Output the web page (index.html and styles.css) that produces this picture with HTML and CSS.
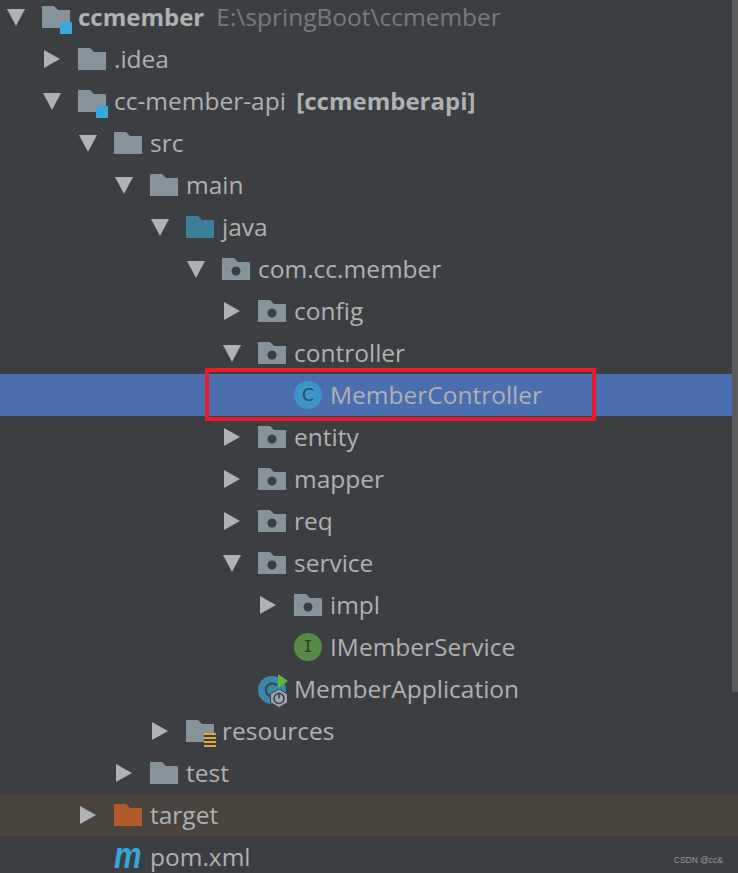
FILE: index.html
```html
<!DOCTYPE html>
<html lang="en">
<head>
<meta charset="utf-8">
<title>Project tree</title>
<link rel="stylesheet" href="styles.css">
</head>
<body>
<svg class="defs" width="0" height="0" aria-hidden="true">
  <defs>
    <symbol id="down" viewBox="0 0 18 18"><path d="M0 1H18L9 18Z"/></symbol>
    <symbol id="right" viewBox="0 0 18 18"><path d="M1 0L17 9L1 18Z"/></symbol>
    <symbol id="folder" viewBox="0 0 28 22"><path d="M0 0H12L16 4H28V22H0Z"/></symbol>
    <symbol id="pkg" viewBox="0 0 28 22"><path fill-rule="evenodd" d="M0 0H12L16 4H28V22H0ZM14 8.500a4.500 4.500 0 1 0 .01 0Z"/></symbol>
  </defs>
</svg>
<main class="tree">
  <div class="row l0"><svg class="arrow"><use href="#down"/></svg>
    <span class="icon"><svg class="folder"><use href="#folder"/></svg><i class="badge"></i></span>
    <span class="label"><b>ccmember</b><span class="path">E:\springBoot\ccmember</span></span></div>
  <div class="row l1"><svg class="arrow"><use href="#right"/></svg>
    <span class="icon"><svg class="folder"><use href="#folder"/></svg></span><span class="label">.idea</span></div>
  <div class="row l1"><svg class="arrow"><use href="#down"/></svg>
    <span class="icon"><svg class="folder"><use href="#folder"/></svg><i class="badge"></i></span>
    <span class="label">cc-member-api <b class="tag">[ccmemberapi]</b></span></div>
  <div class="row l2"><svg class="arrow"><use href="#down"/></svg>
    <span class="icon"><svg class="folder"><use href="#folder"/></svg></span><span class="label">src</span></div>
  <div class="row l3"><svg class="arrow"><use href="#down"/></svg>
    <span class="icon"><svg class="folder"><use href="#folder"/></svg></span><span class="label">main</span></div>
  <div class="row l4"><svg class="arrow"><use href="#down"/></svg>
    <span class="icon"><svg class="folder source"><use href="#folder"/></svg></span><span class="label">java</span></div>
  <div class="row l5"><svg class="arrow"><use href="#down"/></svg>
    <span class="icon"><svg class="folder"><use href="#pkg"/></svg></span><span class="label">com.cc.member</span></div>
  <div class="row l6"><svg class="arrow"><use href="#right"/></svg>
    <span class="icon"><svg class="folder"><use href="#pkg"/></svg></span><span class="label">config</span></div>
  <div class="row l6"><svg class="arrow"><use href="#down"/></svg>
    <span class="icon"><svg class="folder"><use href="#pkg"/></svg></span><span class="label">controller</span></div>
  <div class="row l7 selected"><span class="arrow"></span>
    <span class="icon"><span class="circle class-c">C</span></span><span class="label">MemberController</span></div>
  <div class="row l6"><svg class="arrow"><use href="#right"/></svg>
    <span class="icon"><svg class="folder"><use href="#pkg"/></svg></span><span class="label">entity</span></div>
  <div class="row l6"><svg class="arrow"><use href="#right"/></svg>
    <span class="icon"><svg class="folder"><use href="#pkg"/></svg></span><span class="label">mapper</span></div>
  <div class="row l6"><svg class="arrow"><use href="#right"/></svg>
    <span class="icon"><svg class="folder"><use href="#pkg"/></svg></span><span class="label">req</span></div>
  <div class="row l6"><svg class="arrow"><use href="#down"/></svg>
    <span class="icon"><svg class="folder"><use href="#pkg"/></svg></span><span class="label">service</span></div>
  <div class="row l7"><svg class="arrow"><use href="#right"/></svg>
    <span class="icon"><svg class="folder"><use href="#pkg"/></svg></span><span class="label">impl</span></div>
  <div class="row l7"><span class="arrow"></span>
    <span class="icon"><span class="circle class-i">I</span></span><span class="label">IMemberService</span></div>
  <div class="row l6"><span class="arrow"></span>
    <span class="icon">
      <svg class="spring" viewBox="0 0 36 38" width="36" height="38">
        <circle cx="14" cy="18" r="14" fill="#3d88a8"/>
        <path d="M19 13.500a6.500 6.500 0 1 0 0 9" fill="none" stroke="#2f4f5c" stroke-width="2.500"/>
        <path d="M20 2L30 9L20 16Z" fill="#5db53a"/>
        <path d="M21 17L29.500 22V30.500L21 35.500L12.500 30.500V22Z" fill="#9aa7b0" stroke="#3c3f41" stroke-width="1"/>
        <circle cx="21" cy="26.500" r="5" fill="none" stroke="#3c3f41" stroke-width="1.500"/>
        <path d="M21 20.500V26.500" stroke="#3c3f41" stroke-width="1.500"/>
      </svg>
    </span><span class="label">MemberApplication</span></div>
  <div class="row l4"><svg class="arrow"><use href="#right"/></svg>
    <span class="icon"><svg class="folder"><use href="#folder"/></svg><i class="lines"></i></span><span class="label">resources</span></div>
  <div class="row l3"><svg class="arrow"><use href="#right"/></svg>
    <span class="icon"><svg class="folder"><use href="#folder"/></svg></span><span class="label">test</span></div>
  <div class="row l2 excluded"><svg class="arrow"><use href="#right"/></svg>
    <span class="icon"><svg class="folder target"><use href="#folder"/></svg></span><span class="label">target</span></div>
  <div class="row l2"><span class="arrow"></span>
    <span class="icon"><span class="maven">m</span></span><span class="label">pom.xml</span></div>
</main>
<div class="callout"></div>
<div class="scrollbar"></div>
<div class="watermark">CSDN @cc&amp;</div>
</body>
</html>
```
FILE: styles.css
```css
* { box-sizing: border-box; }
html, body { margin: 0; height: 100%; }
body {
  position: relative;
  overflow: hidden;
  background: #3c3f41;
  color: #afb1b3;
  font-family: "Open Sans", "Noto Sans", sans-serif;
  font-size: 24.5px;
}
.defs { position: absolute; }
.tree { display: flex; flex-direction: column; margin-top: -4px; }
.row { display: flex; align-items: center; height: 42px; white-space: nowrap; }
.l0 { padding-left: 7px; }
.l1 { padding-left: 43px; }
.l2 { padding-left: 79px; }
.l3 { padding-left: 115px; }
.l4 { padding-left: 151px; }
.l5 { padding-left: 187px; }
.l6 { padding-left: 223px; }
.l7 { padding-left: 259px; }
.selected { background: #4b6eaf; }
.excluded { background: #49453e; }
.arrow { display: block; flex: none; width: 18px; height: 18px; fill: #afb1b3; }
.icon { position: relative; flex: none; display: flex; align-items: center; width: 28px; height: 28px; margin-left: 17px; margin-right: 8px; }
.folder { display: block; width: 28px; height: 22px; fill: #87939a; }
.folder.source { fill: #3d7f99; }
.folder.target { fill: #b05a2b; }
.badge { position: absolute; left: 18px; top: 19px; width: 12px; height: 12px; background: #3ba7d8; }
.lines {
  position: absolute; left: 18px; top: 16px; width: 12px; height: 15px;
  background: repeating-linear-gradient(#e0a840 0 2px, #3c3f41 2px 4px);
}
.circle {
  display: flex; align-items: center; justify-content: center;
  width: 28px; height: 28px; border-radius: 50%;
  font-family: "DejaVu Sans Mono", monospace; font-size: 15px; color: #33393d;
}
.class-c { background: #3c94c9; color: #2b4a63; font-family: "DejaVu Sans", sans-serif; font-size: 17px; }
.class-i { background: #578a46; color: #303a2c; }
.spring { position: absolute; left: 0; top: -3px; overflow: visible; }
.maven {
  font-family: "Liberation Sans", sans-serif; font-weight: 700; font-style: italic;
  font-size: 31px; line-height: 28px; color: #33a8d8; margin-top: -3px; width: 28px;
  transform: scale(1, 1.22); transform-origin: left center;
}
.label { color: #afb1b3; margin-bottom: 2px; }
.label b { font-weight: 700; font-size: 24px; }
.label .tag { margin-left: 4px; }
.path { margin-left: 12px; color: #777a7c; }
.callout {
  position: absolute; left: 205px; top: 368px; width: 391px; height: 53px;
  border: 4px solid #e81c2a;
}
.scrollbar {
  position: absolute; right: 0; top: 0; width: 6px; height: 692px; background: #595b5c;
}
.watermark {
  position: absolute; right: 15px; bottom: 8px;
  font-family: "Liberation Sans", sans-serif; font-size: 8.5px; color: #9a9a9a;
}
```
